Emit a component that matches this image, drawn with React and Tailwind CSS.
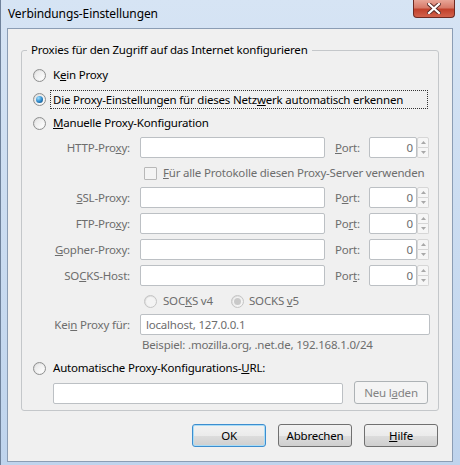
import React from 'react';

const ui = "font-['Noto_Sans',sans-serif] text-[11.5px] leading-[16px] tracking-[-0.2px] whitespace-nowrap";

function Radio({ checked, disabled }) {
  return (
    <span className={`flex h-[13px] w-[13px] shrink-0 items-center justify-center rounded-full border ${disabled ? 'border-[#c4c4c4]' : 'border-[#8e8f8f]'} bg-gradient-to-br from-[#d8d8d8] to-[#fcfcfc]`}>
      <span className={`flex h-[9px] w-[9px] items-center justify-center rounded-full ${disabled ? 'bg-[#f4f4f4]' : 'bg-gradient-to-br from-[#e6e6e6] to-[#ffffff]'}`}>
        {checked && <span className={`h-[7px] w-[7px] rounded-full ${disabled ? 'bg-[#c9c9c9]' : 'bg-[radial-gradient(circle_at_35%_30%,#9fe0ff,#2a86c8_55%,#0d3e6b)]'}`} />}
      </span>
    </span>
  );
}

function Field({ w, children }) {
  return (
    <div className={`flex h-[21px] items-center rounded-[2px] border border-[#bcc0c4] bg-white px-[5px] text-[#6d6d6d] ${w}`}>{children}</div>
  );
}

function Spin() {
  return (
    <div className="flex h-[21px]">
      <div className="flex w-[48px] items-center justify-end rounded-[2px] border border-[#bcc0c4] bg-white pr-[3px] text-[#6d6d6d]">0</div>
      <div className="flex w-[12px] flex-col">
        <div className="flex h-[11px] items-center justify-center rounded-t-[2px] border border-[#d6d6d6] bg-[#f6f6f6]">
          <svg width="5" height="3" viewBox="0 0 5 3"><path d="M2.5 0L5 3H0z" fill="#a8a8a8" /></svg>
        </div>
        <div className="flex h-[10px] items-center justify-center rounded-b-[2px] border border-t-0 border-[#d6d6d6] bg-[#f6f6f6]">
          <svg width="5" height="3" viewBox="0 0 5 3"><path d="M0 0H5L2.5 3z" fill="#a8a8a8" /></svg>
        </div>
      </div>
    </div>
  );
}

function ProxyRow({ label, port, mt }) {
  return (
    <div className={`flex h-[21px] items-center ${mt}`}>
      <span className="w-[108px] text-right text-[#6d6d6d]">{label}:</span>
      <Field w="ml-[10px] w-[185px]" />
      <span className="ml-[10px] w-[34px] text-[#6d6d6d]">{port}:</span>
      <Spin />
    </div>
  );
}

function Button({ children, def, disabled }) {
  return (
    <div className={`flex h-[23px] w-[74px] items-center justify-center rounded-[3px] border ${def ? 'border-[#3c8dcf] shadow-[0_0_0_1px_#a9dcf6_inset]' : disabled ? 'border-[#adb2b5]' : 'border-[#707070]'} ${disabled ? 'bg-[#f4f4f4] text-[#838383]' : 'bg-[linear-gradient(#f2f2f2_0%,#ebebeb_50%,#dddddd_50%,#cfcfcf_100%)] text-black'}`}>
      {children}
    </div>
  );
}

export default function App() {
  return (
    <div className={`${ui} flex h-[465px] w-[460px] flex-col border-l border-[#6f829b] bg-gradient-to-b from-[#d6e4f4] to-[#bfd4ed] text-black`}>
      <div className="flex h-[28px] shrink-0 items-start justify-between">
        <span className="mt-[6px] ml-[7px] text-[12px] tracking-[-0.1px]">Verbindungs-Einstellungen</span>
        <div className="mr-[5px] flex h-[18px] w-[42px] items-center justify-center rounded-b-[4px] border border-t-0 border-[#6e2a22] bg-[linear-gradient(#e8a597_0%,#d77a69_45%,#c1412c_55%,#d2624c_100%)]">
          <svg width="14" height="11" viewBox="0 0 14 11">
            <path d="M2 1L12 10M12 1L2 10" stroke="#5a2a26" strokeWidth="4" strokeLinecap="square" />
            <path d="M2 1L12 10M12 1L2 10" stroke="#ffffff" strokeWidth="2.2" strokeLinecap="square" />
          </svg>
        </div>
      </div>
      <div className="mr-[7px] ml-[6px] flex h-[434px] flex-col border border-[#8b9db4] bg-[#f0f0f0]">
        <fieldset className="mx-[13px] mt-[13px] rounded-[3px] border border-[#c4c7ca] pb-[6px]">
          <legend className="ml-[5px] px-[4px]">Proxies für den Zugriff auf das Internet konfigurieren</legend>
          <div className="flex flex-col pt-[7px]">
            <div className="flex h-[20px] items-center pl-[11px]">
              <Radio />
              <span className="ml-[4px] border border-transparent px-[2px]">K<u>e</u>in Proxy</span>
            </div>
            <div className="mt-[4px] flex h-[20px] items-center pl-[11px]">
              <Radio checked />
              <span className="ml-[4px] w-[378px] border border-dotted border-[#333] px-[2px] leading-[17px]">Die Proxy-Einstellungen für dieses Netz<u>w</u>erk automatisch erkennen</span>
            </div>
            <div className="mt-[4px] flex h-[20px] items-center pl-[11px]">
              <Radio />
              <span className="ml-[4px] border border-transparent px-[2px]"><u>M</u>anuelle Proxy-Konfiguration</span>
            </div>
            <ProxyRow label={<>HTTP-Pro<u>x</u>y</>} port={<><u>P</u>ort</>} mt="mt-[4px]" />
            <div className="mt-[5px] flex h-[20px] items-center pl-[122px] text-[#6d6d6d]">
              <span className="h-[13px] w-[13px] shrink-0 rounded-[1px] border border-[#b8b8b8] bg-[#f4f4f4]" />
              <span className="ml-[6px]"><u>F</u>ür alle Protokolle diesen Proxy-Server verwenden</span>
            </div>
            <ProxyRow label={<><u>S</u>SL-Proxy</>} port={<>P<u>o</u>rt</>} mt="mt-[4px]" />
            <ProxyRow label={<>FTP-Pro<u>x</u>y</>} port={<>Po<u>r</u>t</>} mt="mt-[5px]" />
            <ProxyRow label={<><u>G</u>opher-Proxy</>} port={<>Port</>} mt="mt-[5px]" />
            <ProxyRow label={<>SO<u>C</u>KS-Host</>} port={<>Por<u>t</u></>} mt="mt-[5px]" />
            <div className="mt-[5px] flex h-[20px] items-center pl-[122px] text-[#6d6d6d]">
              <Radio disabled />
              <span className="ml-[6px] w-[68px]">SOC<u>K</u>S v4</span>
              <Radio checked disabled />
              <span className="ml-[5px]">SOCKS <u>v</u>5</span>
            </div>
            <div className="mt-[3px] flex h-[21px] items-center">
              <span className="w-[108px] text-right text-[#6d6d6d]">Kei<u>n</u> Proxy für:</span>
              <Field w="ml-[10px] w-[290px]">localhost, 127.0.0.1</Field>
            </div>
            <div className="mt-[2px] flex h-[16px] items-center pl-[120px] text-[#6d6d6d]">Beispiel: .mozilla.org, .net.de, 192.168.1.0/24</div>
            <div className="mt-[5px] flex h-[20px] items-center pl-[11px]">
              <Radio />
              <span className="ml-[4px] border border-transparent px-[2px]">Automatische Proxy-Konfigurations-<u>U</u>RL:</span>
            </div>
            <div className="mt-[3px] flex h-[23px] items-end pl-[31px]">
              <Field w="w-[290px]" />
              <div className="ml-[11px]">
                <Button disabled>Neu l<u>a</u>den</Button>
              </div>
            </div>
          </div>
        </fieldset>
        <div className="mt-[13px] flex justify-end gap-[12px] pr-[14px]">
          <Button def>OK</Button>
          <Button>Abbrechen</Button>
          <Button><u>H</u>ilfe</Button>
        </div>
      </div>
    </div>
  );
}
